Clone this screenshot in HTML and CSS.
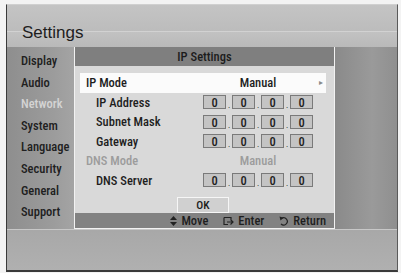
FILE: index.html
```html
<!DOCTYPE html>
<html lang="en">
<head>
    <meta charset="UTF-8">
    <title>Settings</title>
    <link rel="stylesheet" href="styles.css">
</head>
<body>
    <div class="screen">
        <header class="top">
            <h1>Settings</h1>
        </header>
        <div class="middle">
            <ul class="menu">
                <li>Display</li>
                <li>Audio</li>
                <li class="active">Network</li>
                <li>System</li>
                <li>Language</li>
                <li>Security</li>
                <li>General</li>
                <li>Support</li>
            </ul>
            <div class="dialog">
                <div class="title">IP Settings</div>
                <div class="rows">
                    <div class="row selected">
                        <span class="label">IP Mode</span>
                        <span class="value">Manual</span>
                        <span class="arrow">&#9656;</span>
                    </div>
                    <div class="row sub">
                        <span class="label">IP Address</span>
                        <span class="value ip"><b>0</b><i>.</i><b>0</b><i>.</i><b>0</b><i>.</i><b>0</b></span>
                    </div>
                    <div class="row sub">
                        <span class="label">Subnet Mask</span>
                        <span class="value ip"><b>0</b><i>.</i><b>0</b><i>.</i><b>0</b><i>.</i><b>0</b></span>
                    </div>
                    <div class="row sub">
                        <span class="label">Gateway</span>
                        <span class="value ip"><b>0</b><i>.</i><b>0</b><i>.</i><b>0</b><i>.</i><b>0</b></span>
                    </div>
                    <div class="row disabled">
                        <span class="label">DNS Mode</span>
                        <span class="value">Manual</span>
                    </div>
                    <div class="row sub">
                        <span class="label">DNS Server</span>
                        <span class="value ip"><b>0</b><i>.</i><b>0</b><i>.</i><b>0</b><i>.</i><b>0</b></span>
                    </div>
                    <div class="ok-row"><span class="ok">OK</span></div>
                </div>
                <div class="keys">
                    <span class="key">
                        <svg width="7" height="10" viewBox="0 0 7 10"><path d="M3.5 0 L7 4 H0 Z M0 6 H7 L3.5 10 Z" fill="#222"/></svg>
                        Move
                    </span>
                    <span class="key">
                        <svg width="11" height="10" viewBox="0 0 11 10"><path d="M1 1.5 H8 V4 M1 1.5 V8.5 H5 M4 6 H10 M7.5 3.5 L10 6 L7.5 8.5" fill="none" stroke="#222" stroke-width="1.2"/></svg>
                        Enter
                    </span>
                    <span class="key">
                        <svg width="10" height="10" viewBox="0 0 10 10"><path d="M2.5 2.5 A3.6 3.6 0 1 1 2 7.8" fill="none" stroke="#222" stroke-width="1.2"/><path d="M0.5 0.5 L4.5 1.8 L1.5 4.5 Z" fill="#222"/></svg>
                        Return
                    </span>
                </div>
            </div>
            <div class="side"></div>
        </div>
        <div class="bottom"></div>
    </div>
</body>
</html>
```

FILE: styles.css
```css
body {
    margin: 0;
    background-color: #f3f3f3;
    font-family: Roboto, "Liberation Sans", sans-serif;
    font-stretch: condensed;
}

.screen {
    width: 390px;
    height: 265px;
    margin: 4px 0 0 6px;
    border-left: 1px solid #3a3a3a;
    border-right: 1px solid #5a5a5a;
    border-top: 1px solid #d0d0d0;
    border-bottom: 2px solid #3a3a3a;
    display: flex;
    flex-direction: column;
    background-color: #a9a9a9;
}

.top {
    height: 42px;
    background: linear-gradient(#c4c4c4, #bcbcbc 62%, #d4d4d4 63%, #c2c2c2 64%, #b9b9b9);
    display: flex;
    align-items: flex-end;
}

.top h1 {
    margin: 0 0 4px 15px;
    font-family: "Liberation Sans", sans-serif;
    font-stretch: normal;
    font-weight: normal;
    font-size: 17px;
    color: #1e1e1e;
}

.middle {
    height: 182px;
    display: flex;
}

.menu {
    width: 67px;
    margin: 0;
    padding: 3px 0 0 0;
    list-style-type: none;
    background: linear-gradient(90deg, #8e8e8e, #9c9c9c 70%, #a4a4a4);
}

.menu li {
    height: 21.6px;
    line-height: 21px;
    padding-left: 14px;
    font-size: 12.5px;
    font-weight: 500;
    color: #202020;
}

.menu li.active {
    color: #d4d4d4;
}

.dialog {
    width: 259px;
    border: 1px solid #f2f2f2;
    border-top: none;
    background-color: #d9d9d9;
    display: flex;
    flex-direction: column;
}

.title {
    height: 19px;
    line-height: 19px;
    background-color: #7f7f7f;
    text-align: center;
    font-size: 12.5px;
    font-weight: 500;
    color: #1c1c1c;
}

.rows {
    flex: 1;
    padding: 7px 8px 0 5px;
}

.row {
    height: 19.5px;
    display: flex;
    align-items: center;
    font-size: 12.5px;
    font-weight: 500;
    color: #1e1e1e;
}

.row .label {
    width: 120px;
    box-sizing: border-box;
    padding-left: 6px;
}

.row.sub .label {
    padding-left: 16px;
}

.row .value {
    width: 116px;
    text-align: center;
}

.row.selected {
    background-color: #fbfbfb;
}

.row .arrow {
    margin-left: 3px;
    font-size: 8px;
    color: #8a8a8a;
}

.row.disabled {
    color: #9c9c9c;
}

.ip {
    display: flex;
    justify-content: center;
    align-items: flex-end;
    height: 14px;
}

.ip b {
    width: 23px;
    height: 14px;
    line-height: 13px;
    box-sizing: border-box;
    border: 1px solid #7a7a7a;
    background-color: #c4c4c4;
    text-align: center;
    font-weight: 500;
}

.ip i {
    width: 6px;
    font-style: normal;
    font-size: 8px;
    line-height: 6px;
    text-align: center;
}

.ok-row {
    display: flex;
    justify-content: center;
    margin-top: 7px;
}

.ok {
    width: 50px;
    height: 14px;
    line-height: 14px;
    border: 1px solid #f6f6f6;
    background-color: #d0d0d0;
    text-align: center;
    font-size: 11.5px;
    font-weight: 500;
    color: #1e1e1e;
}

.keys {
    height: 17px;
    background-color: #828282;
    display: flex;
    justify-content: flex-end;
    align-items: center;
    gap: 15px;
    padding-right: 8px;
    font-size: 12.5px;
    font-weight: 500;
    color: #1e1e1e;
}

.key {
    display: flex;
    align-items: center;
    gap: 4px;
}

.side {
    flex: 1;
    background: linear-gradient(90deg, #8a8a8a, #9a9a9a 60%, #8f8f8f);
}

.bottom {
    flex: 1;
    border-top: 1px solid #c8c8c8;
    background: linear-gradient(#a8a8a8, #b0b0b0);
}
```
